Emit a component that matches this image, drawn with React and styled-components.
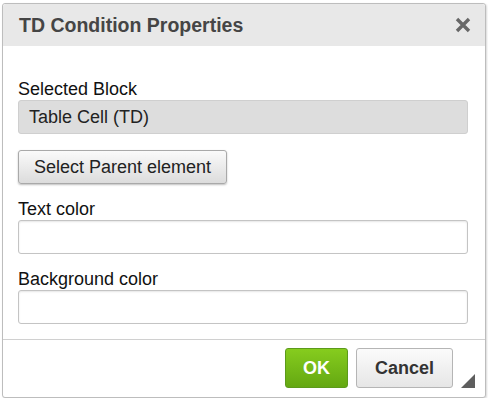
import styled, { createGlobalStyle } from "styled-components";

const GlobalStyle = createGlobalStyle`
  body {
    margin: 0;
    background: #fff;
    font-family: "Liberation Sans", Arial, sans-serif;
  }
`;

const Dialog = styled.div`
  margin: 3px 0 0 2px;
  width: 482px;
  height: 393px;
  border: 1px solid #bdbdbd;
  border-radius: 3px;
  background: #fff;
  display: flex;
  flex-direction: column;
  box-shadow: 1px 1px 2px rgba(0, 0, 0, 0.15);
  position: relative;
`;

const TitleBar = styled.div`
  height: 42px;
  background: #e8e8e8;
  display: flex;
  align-items: center;
  justify-content: space-between;
  padding: 0 14px 0 16px;
  border-radius: 3px 3px 0 0;
`;

const Title = styled.h1`
  margin: 0;
  font-size: 19.5px;
  font-weight: bold;
  color: #454545;
`;

const Body = styled.div`
  flex: 1;
  padding: 33px 17px 0 15px;
  display: flex;
  flex-direction: column;
`;

const Label = styled.label`
  display: block;
  font-size: 18px;
  color: #111;
  line-height: 20px;
  margin: ${(p) => p.$top || 0}px 0 1px;
`;

const ReadOnly = styled.div`
  height: 32px;
  background: #dddddd;
  border: 1px solid #cfcfcf;
  border-radius: 3px;
  display: flex;
  align-items: center;
  padding-left: 10px;
  font-size: 18px;
  color: #222;
`;

const ParentButton = styled.button`
  align-self: flex-start;
  margin-top: 16px;
  height: 34px;
  padding: 0 15px;
  font-family: inherit;
  font-size: 18px;
  color: #222;
  border: 1px solid #a9a9a9;
  border-radius: 3px;
  background: linear-gradient(#fafafa, #dcdcdc);
  box-shadow: 0 1px 2px rgba(0, 0, 0, 0.25);
`;

const Input = styled.input`
  display: block;
  box-sizing: border-box;
  width: 100%;
  height: 34px;
  border: 1px solid #c4c4c4;
  border-radius: 3px;
  box-shadow: inset 0 1px 2px rgba(0, 0, 0, 0.1);
  font-family: inherit;
  font-size: 18px;
`;

const Footer = styled.div`
  height: 49px;
  border-top: 1px solid #d0d0d0;
  display: flex;
  align-items: flex-start;
  justify-content: flex-end;
  padding: 8px 32px 0 0;
  gap: 8px;
`;

const DialogButton = styled.button`
  height: 40px;
  padding: 0 ${(p) => (p.$primary ? 17 : 18)}px;
  font-family: inherit;
  font-size: 18px;
  font-weight: bold;
  border-radius: 3px;
  border: 1px solid ${(p) => (p.$primary ? "#5c9a1b" : "#b5b5b5")};
  color: ${(p) => (p.$primary ? "#fff" : "#333")};
  background: ${(p) =>
    p.$primary
      ? "linear-gradient(#86cc1e, #64a812)"
      : "linear-gradient(#fbfbfb, #e6e6e6)"};
`;

const Resize = styled.div`
  position: absolute;
  right: 10px;
  bottom: 9px;
  width: 0;
  height: 0;
  border-left: 14px solid transparent;
  border-bottom: 14px solid #5e5e5e;
`;

function CloseIcon() {
  return (
    <svg width="16" height="16" viewBox="0 0 16 16">
      <path
        d="M2 2 L14 14 M14 2 L2 14"
        stroke="#676767"
        strokeWidth="3.4"
        strokeLinecap="butt"
      />
    </svg>
  );
}

export default function App() {
  return (
    <>
      <GlobalStyle />
      <Dialog>
        <TitleBar>
          <Title>TD Condition Properties</Title>
          <CloseIcon />
        </TitleBar>
        <Body>
          <Label>Selected Block</Label>
          <ReadOnly>Table Cell (TD)</ReadOnly>
          <ParentButton>Select Parent element</ParentButton>
          <Label $top={15}>Text color</Label>
          <Input />
          <Label $top={15}>Background color</Label>
          <Input />
        </Body>
        <Footer>
          <DialogButton $primary>OK</DialogButton>
          <DialogButton>Cancel</DialogButton>
        </Footer>
        <Resize />
      </Dialog>
    </>
  );
}
